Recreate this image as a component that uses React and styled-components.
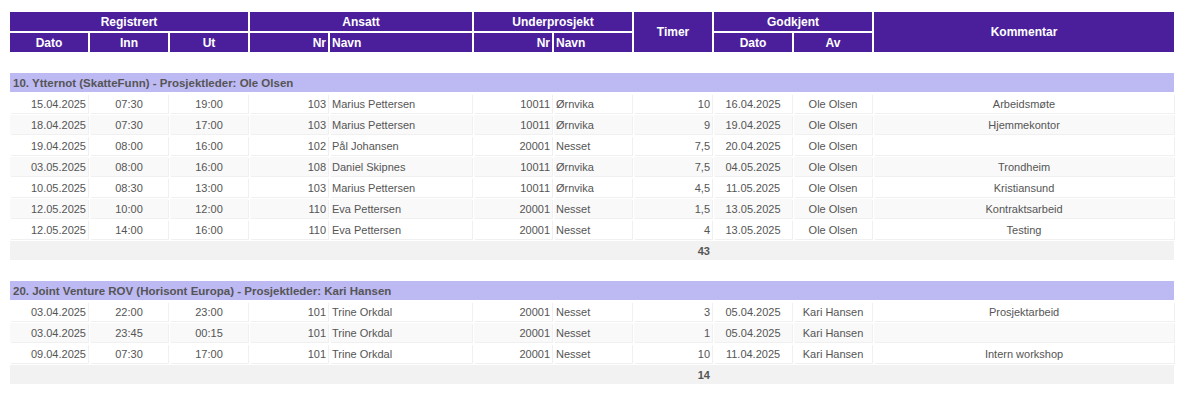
import React from "react";
import styled, { createGlobalStyle } from "styled-components";

const Global = createGlobalStyle`
  body {
    margin: 10px 8px 8px;
    background: #ffffff;
    font-family: "Liberation Sans", Arial, sans-serif;
  }
`;

const Table = styled.table`
  width: 100%;
  border-collapse: separate;
  border-spacing: 2px;
  table-layout: fixed;
  font-family: "Liberation Sans", Arial, sans-serif;
  font-size: 11px;
  color: #555;
`;

const Th = styled.th`
  background: #4b1f9c;
  color: #ffffff;
  font-weight: bold;
  font-size: 12px;
  height: 19px;
  padding: 0 2px;
  text-align: ${(p) => p.$align || "center"};
  white-space: nowrap;
  box-sizing: border-box;
`;

const Spacer = styled.td`
  height: 17px;
  padding: 0;
`;

const GroupCell = styled.td`
  background: #bdb9f3;
  color: #555;
  font-weight: bold;
  font-size: 11.5px;
  height: 19px;
  padding: 0 3px;
  text-align: left;
  white-space: nowrap;
`;

const Row = styled.tr`
  background: ${(p) => (p.$alt ? "#f9f9f9" : "#ffffff")};
`;

const Td = styled.td`
  height: 19px;
  padding: 0 2px;
  box-sizing: border-box;
  text-align: ${(p) => p.$align || "left"};
  white-space: nowrap;
  overflow: hidden;
  box-shadow: 1px 1px 0 #f0f0f0;
`;

const TotalCell = styled.td`
  background: #f2f2f2;
  height: 19px;
  padding: 0;
  font-weight: bold;
`;

const TotalValue = styled.div`
  width: 700px;
  text-align: right;
`;

const widths = [78, 78, 78, 78, 142, 78, 78, 78, 78, 78, 300];

const groups = [
  {
    title: "10. Ytternot (SkatteFunn) - Prosjektleder: Ole Olsen",
    total: "43",
    rows: [
      ["15.04.2025", "07:30", "19:00", "103", "Marius Pettersen", "10011", "Ørnvika", "10", "16.04.2025", "Ole Olsen", "Arbeidsmøte"],
      ["18.04.2025", "07:30", "17:00", "103", "Marius Pettersen", "10011", "Ørnvika", "9", "19.04.2025", "Ole Olsen", "Hjemmekontor"],
      ["19.04.2025", "08:00", "16:00", "102", "Pål Johansen", "20001", "Nesset", "7,5", "20.04.2025", "Ole Olsen", ""],
      ["03.05.2025", "08:00", "16:00", "108", "Daniel Skipnes", "10011", "Ørnvika", "7,5", "04.05.2025", "Ole Olsen", "Trondheim"],
      ["10.05.2025", "08:30", "13:00", "103", "Marius Pettersen", "10011", "Ørnvika", "4,5", "11.05.2025", "Ole Olsen", "Kristiansund"],
      ["12.05.2025", "10:00", "12:00", "110", "Eva Pettersen", "20001", "Nesset", "1,5", "13.05.2025", "Ole Olsen", "Kontraktsarbeid"],
      ["12.05.2025", "14:00", "16:00", "110", "Eva Pettersen", "20001", "Nesset", "4", "13.05.2025", "Ole Olsen", "Testing"],
    ],
  },
  {
    title: "20. Joint Venture ROV (Horisont Europa) - Prosjektleder: Kari Hansen",
    total: "14",
    rows: [
      ["03.04.2025", "22:00", "23:00", "101", "Trine Orkdal", "20001", "Nesset", "3", "05.04.2025", "Kari Hansen", "Prosjektarbeid"],
      ["03.04.2025", "23:45", "00:15", "101", "Trine Orkdal", "20001", "Nesset", "1", "05.04.2025", "Kari Hansen", ""],
      ["09.04.2025", "07:30", "17:00", "101", "Trine Orkdal", "20001", "Nesset", "10", "11.04.2025", "Kari Hansen", "Intern workshop"],
    ],
  },
];

const aligns = ["right", "center", "center", "right", "left", "right", "left", "right", "center", "center", "center"];

export default function App() {
  return (
    <>
      <Global />
      <Table>
        <colgroup>
          {widths.map((w, i) => (
            <col key={i} style={{ width: w }} />
          ))}
        </colgroup>
        <thead>
          <tr>
            <Th colSpan={3}>Registrert</Th>
            <Th colSpan={2}>Ansatt</Th>
            <Th colSpan={2}>Underprosjekt</Th>
            <Th rowSpan={2}>Timer</Th>
            <Th colSpan={2}>Godkjent</Th>
            <Th rowSpan={2}>Kommentar</Th>
          </tr>
          <tr>
            <Th>Dato</Th>
            <Th>Inn</Th>
            <Th>Ut</Th>
            <Th $align="right">Nr</Th>
            <Th $align="left">Navn</Th>
            <Th $align="right">Nr</Th>
            <Th $align="left">Navn</Th>
            <Th>Dato</Th>
            <Th>Av</Th>
          </tr>
        </thead>
        {groups.map((g, gi) => (
          <tbody key={gi}>
            <tr>
              <Spacer colSpan={11} />
            </tr>
            <tr>
              <GroupCell colSpan={11}>{g.title}</GroupCell>
            </tr>
            {g.rows.map((r, ri) => (
              <Row key={ri} $alt={ri % 2 === 1}>
                {r.map((c, ci) => (
                  <Td key={ci} $align={aligns[ci]}>
                    {c}
                  </Td>
                ))}
              </Row>
            ))}
            <tr>
              <TotalCell colSpan={11}>
                <TotalValue>{g.total}</TotalValue>
              </TotalCell>
            </tr>
          </tbody>
        ))}
      </Table>
    </>
  );
}
